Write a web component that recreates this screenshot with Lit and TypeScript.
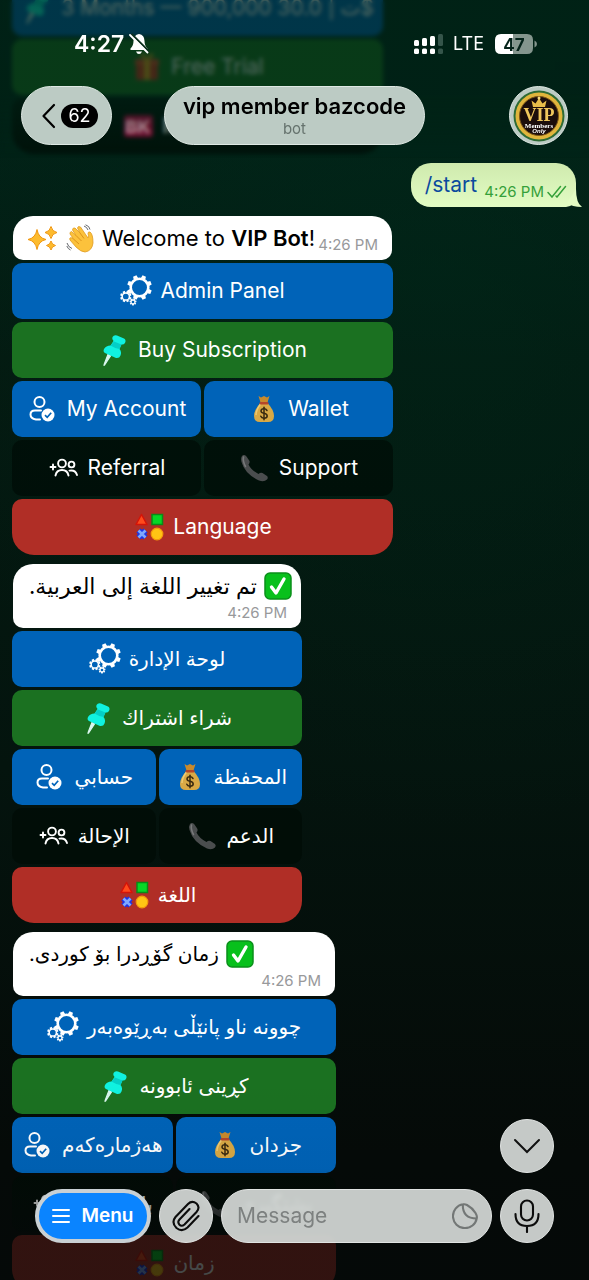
import { LitElement, html, css, svg } from "lit";
import { customElement, property } from "lit/decorators.js";

type Tone = "blue" | "green" | "red" | "dark";
type IconName =
  | "gears" | "pin" | "account" | "bag" | "referral" | "phone" | "shapes" | "gift" | "back";

interface Key { icon: IconName; label: string; tone: Tone; }
interface Keyboard { lang: string; rows: Key[][]; }

const gear = (cx: number, cy: number, r: number, teeth: number, w: number) => {
  const step = 360 / teeth;
  return svg`
    <circle cx=${cx} cy=${cy} r=${r} fill="none" stroke="#fff" stroke-width=${w}></circle>
    ${Array.from({ length: teeth }, (_, i) => svg`
      <path d="M${cx - w * 0.9} ${cy - r - w * 0.2}L${cx - w * 0.7} ${cy - r - w * 1.4}H${cx + w * 0.7}L${cx + w * 0.9} ${cy - r - w * 0.2}Z"
        fill="#fff" transform="rotate(${i * step + step / 2} ${cx} ${cy})"></path>`)}`;
};

const ICONS: Record<IconName, unknown> = {
  gears: svg`${gear(19.5, 12.5, 8.8, 8, 2.6)}${gear(5.8, 21.5, 3.6, 8, 1.5)}${gear(13, 27, 1.9, 7, 1.1)}`,
  pin: svg`
    <path d="M12.500 22L6.500 31Q5.500 32 6.500 29.500L10 20.500Z" fill="#d9f7ee" stroke="#d9f7ee" stroke-width="1.200"></path>
    <path d="M14.500 3Q16 .5 19 1.500L26 4.500Q28.500 6 27 9Q25.500 11 23.500 10.500L21.500 15Q24 18 22.500 21.500Q21.500 24.500 18 24L8 19.500Q4.500 18 6 15Q8 11.500 12.500 11.500L15.500 7Q13.500 5.500 14.500 3Z" fill="#10f2e0"></path>
    <path d="M16 7.500L23.500 10.500L21.500 15Q17 14.500 12.500 11.500Z" fill="#04cfc6"></path>`,
  account: svg`
    <g fill="none" stroke="#fff" stroke-width="2" stroke-linecap="round">
      <circle cx="12.500" cy="9" r="5"></circle>
      <path d="M14 17.500H8Q3.500 17.500 3.500 21.500Q3.500 25.500 9 26.500H13"></path>
    </g>
    <circle cx="21" cy="22" r="6.500" fill="#fff"></circle>
    <path d="M18 22.200L20.200 24.300L24.200 19.800" fill="none" stroke="#0063b8" stroke-width="1.700"></path>`,
  bag: svg`
    <path d="M10.500 3L13 4.500L16 3L19 4.500L21.500 3L19.500 9.500H12.500Z" fill="#c98a2c"></path>
    <path d="M12.500 10H19.500Q26 17 26 23Q26 29 20 29H12Q6 29 6 23Q6 17 12.500 10Z" fill="#d9a945"></path>
    <path d="M12.500 11Q8 17 8 22" fill="none" stroke="#efca72" stroke-width="1.500"></path>
    <rect x="11.500" y="9" width="9" height="2.400" rx="1.200" fill="#b5462a"></rect>
    <g fill="none" stroke="#3a2a10" stroke-width="1.500" stroke-linecap="round">
      <path d="M19 17.500Q18 15.800 16 15.800Q13 15.800 13 18Q13 19.800 16 20.300Q19.200 20.800 19.200 23Q19.200 25.200 16 25.200Q13.500 25.200 12.800 23.300"></path>
      <path d="M16 14.200V26.800"></path>
    </g>`,
  referral: svg`
    <g fill="none" stroke="#fff" stroke-width="1.900" stroke-linecap="round">
      <path d="M2.500 15H7.500M5 12.500V17.500"></path>
      <circle cx="14" cy="11.500" r="3.900"></circle>
      <circle cx="23.500" cy="12.500" r="2.900"></circle>
      <path d="M7.500 23.500Q8.500 18 14 18Q19.500 18 20.500 23.500"></path>
      <path d="M21.500 18.600Q27.500 17.500 29 23"></path>
    </g>`,
  phone: svg`
    <path d="M3 4Q5 2 7.500 4.500L10.500 9Q11 11 9.500 12.500Q12 18 19.500 22Q21.500 20 23.500 21L28 24Q29.500 25.500 28 27.500Q25 30.500 20 28.500Q6 22 2.500 10Q1.500 6 3 4Z" fill="#4a4d4e"></path>
    <path d="M4.500 5Q3.500 9 6.500 14.500" fill="none" stroke="#77797a" stroke-width="1.600" stroke-linecap="round"></path>`,
  shapes: svg`
    <path d="M8.500 3.500L14 13.500H3Z" fill="#ff4a1c" stroke="#d41408" stroke-width="1.500" stroke-linejoin="round"></path>
    <rect x="19" y="3.500" width="10.500" height="10" fill="#06d826" stroke="#0b8a17" stroke-width="1.500"></rect>
    <path d="M5.500 19.500L12.500 26.500M12.500 19.500L5.500 26.500" stroke="#1c35e8" stroke-width="6" stroke-linejoin="round"></path>
    <path d="M5.500 19.500L12.500 26.500M12.500 19.500L5.500 26.500" stroke="#7fa8ff" stroke-width="2.600"></path>
    <circle cx="24" cy="23" r="5.800" fill="#ffc414" stroke="#f59a0c" stroke-width="1.200"></circle>`,
  gift: svg`
    <rect x="5" y="12" width="22" height="17" rx="2" fill="#d3351f"></rect>
    <rect x="4" y="8" width="24" height="6" rx="1" fill="#e24a2a"></rect>
    <path d="M13 8H19V29H13Z" fill="#e8a51c"></path>
    <path d="M16 8Q8 6 10 3Q13 1 16 8Q19 1 22 3Q24 6 16 8Z" fill="#e8a51c"></path>`,
  back: svg`<rect x="2" y="5" width="29" height="22" rx="3" fill="#8c0a38"></rect>
    <text x="16" y="23" text-anchor="middle" font-family="Inter, sans-serif" font-size="18" font-weight="800" fill="#f0a8bc">BK</text>`,
};

const CHECK = svg`
  <rect x="1" y="1" width="26" height="26" rx="5" fill="#08c01c" stroke="#0a8f1a" stroke-width="1.500"></rect>
  <path d="M7.500 15L12 21L20 7" fill="none" stroke="#fff" stroke-width="3.400" stroke-linecap="round" stroke-linejoin="round"></path>`;

const keys = (l: string[]): Key[][] => [
  [{ icon: "gears", label: l[0], tone: "blue" }],
  [{ icon: "pin", label: l[1], tone: "green" }],
  [{ icon: "account", label: l[2], tone: "blue" }, { icon: "bag", label: l[3], tone: "blue" }],
  [{ icon: "referral", label: l[4], tone: "dark" }, { icon: "phone", label: l[5], tone: "dark" }],
  [{ icon: "shapes", label: l[6], tone: "red" }],
];

const EARLIER: Keyboard = {
  lang: "en", rows: [
    [{ icon: "pin", label: "3 Months — 900,000 30.0 | ت$", tone: "blue" }],
    [{ icon: "gift", label: "Free Trial", tone: "green" }],
    [{ icon: "back", label: "Main Menu", tone: "dark" }],
  ],
};
const ENGLISH: Keyboard = {
  lang: "en",
  rows: keys(["Admin Panel", "Buy Subscription", "My Account", "Wallet", "Referral", "Support", "Language"]),
};
const ARABIC: Keyboard = {
  lang: "ar",
  rows: keys(["لوحة الإدارة", "شراء اشتراك", "حسابي", "المحفظة", "الإحالة", "الدعم", "اللغة"]),
};
const KURDISH: Keyboard = {
  lang: "ckb",
  rows: keys(["چوونە ناو پانێڵی بەڕێوەبەر", "کڕینی ئابوونە", "هەژمارەکەم", "جزدان", "بانگهێشت", "پشتگیری", "زمان"]),
};

@customElement("bot-keyboard")
class BotKeyboard extends LitElement {
  @property({ attribute: false }) board!: Keyboard;

  static styles = css`
    :host { display: flex; flex-direction: column; gap: 3px; }
    .row { display: grid; grid-auto-flow: column; grid-auto-columns: minmax(0, 1fr); gap: 3px; }
    .key {
      display: flex; align-items: center; justify-content: center; gap: 8px;
      height: 56px; padding: 0; border: 0; border-radius: 10px; color: #fff;
      font: 400 21px/28px Inter, "DejaVu Sans", sans-serif; white-space: nowrap;
    }
    .blue { background: #0063b8; }
    .green { background: #1b7121; }
    .red { background: #b02e26; }
    .dark { background: rgba(0, 12, 5, .7); }
    .row:last-child .key { border-radius: 10px 10px 22px 22px; }
    .icon { width: 32px; height: 32px; flex: none; }
    .rtl { font-size: 20px; }
  `;

  render() {
    const dir = this.board.lang === "en" ? "ltr" : "rtl";
    return this.board.rows.map((row) => html`
      <div class="row">
        ${row.map((k) => html`
          <button class="key ${k.tone}" type="button">
            <svg class="icon" viewBox="0 0 32 32" aria-hidden="true">${ICONS[k.icon]}</svg>
            <span class=${dir} dir=${dir} lang=${this.board.lang}>${k.label}</span>
          </button>`)}
      </div>`);
  }
}

@customElement("chat-header")
class ChatHeader extends LitElement {
  static styles = css`
    :host { display: block; height: 158px; color: #fff; font-family: Inter, sans-serif;
      backdrop-filter: blur(2px);
      background: linear-gradient(rgba(0, 32, 20, .68) 0, rgba(0, 32, 20, .68) 95px, rgba(0, 28, 18, 0) 100%); }
    .status { display: flex; justify-content: space-between; align-items: center;
      height: 86px; padding: 2px 52px 0 74px; box-sizing: border-box; }
    .side { display: flex; align-items: center; }
    .time { font-size: 23px; font-weight: 600; line-height: 28px; margin-right: 5px; }
    .lte { font-size: 18px; line-height: 24px; margin: 0 11px 0 10px; }
    .bar { display: grid; grid-template-columns: 1fr auto 1fr; align-items: center; padding: 0 21px; }
    .pill { display: flex; align-items: center; justify-content: center; box-sizing: border-box;
      height: 59px; border: 1px solid #dfe9e4; border-radius: 30px; background: #bccbc4; color: #000; font-family: inherit; }
    .back { justify-self: start; width: 91px; padding: 0 0 0 6px; gap: 5px; }
    .count { background: #000; color: #fff; border-radius: 12px; font-size: 18px; line-height: 24px; padding: 0 7px; }
    .title { flex-direction: column; padding: 0 18px; }
    .name { font-size: 22px; line-height: 26px; font-weight: 600; margin: 0; }
    .kind { font-size: 15px; line-height: 20px; color: #65726d; }
    .avatar { justify-self: end; width: 59px; padding: 0; }
  `;

  render() {
    return html`
      <div class="status">
        <div class="side">
          <span class="time">4:27</span>
          <svg width="20" height="22" viewBox="0 0 20 22" aria-label="Silent">
            <path d="M10 1Q15.500 2 15.500 8Q15.500 13 18.500 15.500V17H1.500V15.500Q4.500 13 4.500 8Q4.500 2 10 1Z" fill="#fff"></path>
            <path d="M7 18.500H13Q12 21 10 21Q8 21 7 18.500Z" fill="#fff"></path>
            <path d="M2.500 1L20 18.500" stroke="#0b2f1b" stroke-width="2.200"></path>
            <path d="M1 2L18.500 19.500" stroke="#fff" stroke-width="1.800" stroke-linecap="round"></path>
          </svg>
        </div>
        <div class="side">
          <svg width="29" height="20" viewBox="0 0 29 20" aria-label="Signal">
            <g fill="#fff">
              <rect x="0" y="14.500" width="5" height="5.500" rx="1.500"></rect>
              <rect x="8" y="14.500" width="5" height="5.500" rx="1.500"></rect>
              <rect x="16" y="14.500" width="5" height="5.500" rx="1.500"></rect>
              <rect x="0" y="6" width="5" height="6" rx="1.500"></rect>
              <rect x="8" y="4" width="5" height="8" rx="1.500"></rect>
              <rect x="16" y="2" width="5" height="10" rx="1.500"></rect>
            </g>
            <g fill="#35554a">
              <rect x="24" y="14.500" width="5" height="5.500" rx="1.500"></rect>
              <rect x="24" y="0" width="5" height="12" rx="1.500"></rect>
            </g>
          </svg>
          <span class="lte">LTE</span>
          <svg width="42" height="20" viewBox="0 0 42 20" aria-label="Battery">
            <path d="M6 0H18.500V20H6Q0 20 0 14V6Q0 0 6 0Z" fill="#fff"></path>
            <path d="M18.500 0H32Q38 0 38 6V14Q38 20 32 20H18.500Z" fill="#84968e"></path>
            <path d="M39.500 6.500Q42 7.500 42 10Q42 12.500 39.500 13.500Z" fill="#84968e"></path>
            <text x="19" y="16.500" text-anchor="middle" font-size="17" font-weight="700" fill="#04231a">47</text>
          </svg>
        </div>
      </div>
      <div class="bar">
        <button class="pill back" type="button" aria-label="Back">
          <svg width="15" height="26" viewBox="0 0 15 26" aria-hidden="true">
            <path d="M13 2L2.500 13L13 24" fill="none" stroke="#000" stroke-width="2.200" stroke-linecap="round" stroke-linejoin="round"></path>
          </svg>
          <span class="count">62</span>
        </button>
        <div class="pill title">
          <h1 class="name">vip member bazcode</h1>
          <span class="kind">bot</span>
        </div>
        <button class="pill avatar" type="button" aria-label="Profile">
          <svg width="52" height="52" viewBox="0 0 52 52" aria-hidden="true">
            <circle cx="26" cy="26" r="25.500" fill="#2e6b35"></circle>
            <circle cx="26" cy="26" r="21.500" fill="#1b0d0b" stroke="#e0b53c" stroke-width="4"></circle>
            <circle cx="26" cy="26" r="19.500" fill="none" stroke="#7d5516" stroke-width="1"></circle>
            <path d="M20 17L18.500 10.500L22.500 13.500L26 8L29.500 13.500L33.500 10.500L32 17Z" fill="#e8bd4a"></path>
            <circle cx="26" cy="8" r="1.500" fill="#f6dc7c"></circle>
            <text x="26" y="31" text-anchor="middle" font-family="Liberation Serif, serif" font-size="18" font-weight="700" fill="#efc65c">VIP</text>
            <text x="26" y="37.500" text-anchor="middle" font-family="Liberation Serif, serif" font-size="7" font-weight="700" fill="#fff">Members</text>
            <text x="26" y="43" text-anchor="middle" font-family="Liberation Sans, sans-serif" font-size="6" font-weight="700" font-style="italic" fill="#fff">Only</text>
          </svg>
        </button>
      </div>`;
  }
}

@customElement("chat-composer")
class ChatComposer extends LitElement {
  static styles = css`
    :host { display: flex; flex-direction: column; gap: 16px; padding: 40px 35px 37px; font-family: Inter, sans-serif;
      background: linear-gradient(rgba(5, 9, 8, 0) 0, rgba(5, 9, 8, .04) 90px, rgba(5, 9, 8, .74) 155px, rgba(5, 9, 8, .74) 100%); }
    .line { display: flex; gap: 8px; }
    .round, .field, .menu { box-sizing: border-box; height: 54px; border-radius: 27px; }
    .round, .field { background: rgba(214, 218, 216, .92); border: 1px solid #e0e3e2; backdrop-filter: blur(2px); }
    .round { display: flex; align-items: center; justify-content: center; flex: none; width: 54px; padding: 0; }
    .down { align-self: flex-end; }
    .menu { display: flex; align-items: center; justify-content: center; gap: 11px; flex: none; width: 116px; padding: 0;
      border: 4px solid #c9d0d4; background: #0a84ff; color: #fff; font: 600 19px/26px Inter, sans-serif; }
    .field { display: flex; align-items: center; flex: 1; min-width: 0; padding: 0 13px 0 15px; }
    .input { flex: 1; min-width: 0; border: 0; padding: 0; outline: 0; background: none; color: #000;
      font: 400 21px/28px Inter, sans-serif; }
    .input::placeholder { color: #7d8180; opacity: 1; }
  `;

  render() {
    return html`
      <button class="round down" type="button" aria-label="Scroll to latest">
        <svg width="28" height="16" viewBox="0 0 28 16"><path d="M2 2L14 14L26 2" fill="none" stroke="#111" stroke-width="2" stroke-linecap="round"></path></svg>
      </button>
      <div class="line">
        <button class="menu" type="button">
          <svg width="18" height="16" viewBox="0 0 18 16" aria-hidden="true"><path d="M1 2H17M1 8H17M1 14H17" stroke="#fff" stroke-width="2" stroke-linecap="round"></path></svg>
          Menu
        </button>
        <button class="round" type="button" aria-label="Attach">
          <svg width="30" height="34" viewBox="0 0 30 34">
            <path d="M27.500 17L16.500 28.500Q11 33.500 5.500 29Q0 23.500 4.500 18L17 5Q21 1 25.500 4.500Q29.500 8.500 25.500 13L13.500 25.500Q10.500 28 8.300 25.500Q6.200 23 8.500 20.500L18.500 10"
              fill="none" stroke="#0c0c0c" stroke-width="2.100" stroke-linecap="round"></path>
          </svg>
        </button>
        <div class="field">
          <input class="input" type="text" placeholder="Message" aria-label="Message">
          <svg width="26" height="26" viewBox="0 0 26 26" aria-hidden="true">
            <g fill="none" stroke="#737776" stroke-width="2.100" stroke-linejoin="round">
              <path d="M11 1.300Q13 .9 15 2Q20.500 5 23.500 10Q25.300 13 24.800 15A12 12 0 1 1 11 1.300Z"></path>
              <path d="M10.800 1.500Q10.500 15.500 24.700 15.500"></path>
            </g>
          </svg>
        </div>
        <button class="round" type="button" aria-label="Record voice">
          <svg width="26" height="34" viewBox="0 0 26 34">
            <g fill="none" stroke="#0c0c0c" stroke-width="2.100" stroke-linecap="round">
              <rect x="7" y="1.500" width="12" height="20" rx="6"></rect>
              <path d="M1.500 15Q1.500 27 13 27Q24.500 27 24.500 15M13 27V33"></path>
            </g>
          </svg>
        </button>
      </div>`;
  }
}

@customElement("app-root")
class AppRoot extends LitElement {
  static styles = css`
    :host { display: block; }
    .screen { display: grid; grid-template: minmax(0, 1fr) / minmax(0, 1fr); height: 100vh; overflow: hidden;
      background:
        radial-gradient(circle at 75% 22%, rgba(0, 44, 28, .4), transparent 50%),
        linear-gradient(#00261a 0, #031a11 28%, #04140e 60%, #050a08 90%); }
    .log, .top, .bottom { grid-area: 1 / 1; }
    .top { align-self: start; }
    .bottom { align-self: end; }
    .log { display: flex; flex-direction: column; align-items: flex-start; gap: 9px; margin-top: -20px; padding: 0 12px;
      font-family: Inter, "DejaVu Sans", sans-serif; }
    .group { display: flex; flex-direction: column; flex: none; gap: 3px; max-width: 100%; }
    .earlier { width: 371px; }
    .wide { width: 381px; }
    .narrow { width: 290px; }
    .medium { width: 324px; }
    .bubble { margin: 0 1px; padding: 0 14px; background: #fff; color: #000; border-radius: 20px 20px 10px 10px;
      font-size: 22px; line-height: 28px; white-space: nowrap; }
    .inline { display: flex; align-items: center; height: 44px; }
    .stacked { display: flex; flex-direction: column; height: 64px; padding: 8px 14px 0 16px; box-sizing: border-box; }
    .emoji { flex: none; margin-right: 7px; }
    .strong { font-weight: 600; }
    .arabic { display: flex; align-items: center; gap: 7px; height: 28px; align-self: flex-start; font-size: 20px; }
    .arabic:lang(ar) { font-size: 22px; }
    .stamp { font-size: 15px; line-height: 18px; color: #98999b; }
    .inline .stamp { align-self: flex-end; margin: 0 0 6px auto; }
    .stacked .stamp { align-self: flex-end; margin-top: 4px; }
    .sent { display: flex; align-items: center; position: relative; align-self: flex-end; flex: none; box-sizing: border-box;
      height: 44px; margin-right: 1px; padding: 0 9px 0 14px; border-radius: 20px 20px 10px 20px;
      background: linear-gradient(#cfeaae, #e2fcc4); font-size: 21px; line-height: 28px; }
    .command { color: #0b4a9e; text-decoration: none; }
    .sent .stamp { align-self: flex-end; margin: 0 3px 6px 7px; color: #35a03a; }
    .ticks { align-self: flex-end; margin-bottom: 9px; }
    .tail { position: absolute; right: -6px; bottom: 0; }
  `;

  render() {
    return html`
      <main class="screen">
        <section class="log">
          <div class="group earlier"><bot-keyboard .board=${EARLIER}></bot-keyboard></div>
          <div class="sent">
            <a class="command" href="#start">/start</a>
            <span class="stamp">4:26 PM</span>
            <svg class="ticks" width="20" height="13" viewBox="0 0 20 13" aria-label="Read">
              <path d="M1 7.500L5 12L13.500 1.500M9 11L10 12L18.500 1.500" fill="none" stroke="#35a03a" stroke-width="1.500" stroke-linecap="round"></path>
            </svg>
            <svg class="tail" width="18" height="18" viewBox="0 0 18 18" aria-hidden="true"><path d="M12 0Q12 14 18 18Q8 18 3 14Z" fill="#e2fcc4"></path></svg>
          </div>
          <div class="group wide">
            <div class="bubble inline">
              <svg class="emoji" width="32" height="28" viewBox="0 0 32 28" aria-label="sparkles">
                <g fill="#fdbb2d" stroke="#f0960f" stroke-width="1" stroke-linejoin="round">
                  <path d="M10 5.500Q11.500 14 19 15.500Q11.500 17 10 25.500Q8.500 17 1 15.500Q8.500 14 10 5.500Z"></path>
                  <path d="M24 2.500Q25 7.500 30 8.500Q25 9.500 24 14.500Q23 9.500 18 8.500Q23 7.500 24 2.500Z"></path>
                  <path d="M24 17Q24.800 20.700 28.500 21.500Q24.800 22.300 24 26Q23.200 22.300 19.500 21.500Q23.200 20.700 24 17Z"></path>
                </g>
              </svg>
              <svg class="emoji" width="29" height="29" viewBox="0 0 29 29" aria-label="waving hand">
                <path d="M24 8Q27 10 27 19Q26 27 19 28Q15 28 10 23L4 16Q3 14 5 13.500L8 15.500L4 10Q3.500 8 5.500 7.500L10 11.500L6.500 6Q6.500 3.500 9 4L14 9L11.500 4Q12 1.500 14.500 3L22 14Q23 12 22 9.500Q22 7.500 24 8Z" fill="#fcc23c" stroke="#e09a20" stroke-width=".8"></path>
                <path d="M8 15.500L13 20M10 11.500L15.500 17M14 9L18 14.500" fill="none" stroke="#dc931c" stroke-width="1"></path>
                <path d="M18 2Q21 3 22 6M19.500 .8Q23.500 2 24 5.500M1 19Q2 23 6 24.500M.8 22Q2 25 4.500 26" fill="none" stroke="#66696e" stroke-width="1"></path>
              </svg>
              <span>Welcome to <b class="strong">VIP Bot</b>!</span>
              <span class="stamp">4:26 PM</span>
            </div>
            <bot-keyboard .board=${ENGLISH}></bot-keyboard>
          </div>
          <div class="group narrow">
            <div class="bubble stacked">
              <div class="arabic" dir="rtl" lang="ar">
                <svg width="28" height="28" viewBox="0 0 28 28" aria-label="done">${CHECK}</svg>
                <span>تم تغيير اللغة إلى العربية.</span>
              </div>
              <span class="stamp">4:26 PM</span>
            </div>
            <bot-keyboard .board=${ARABIC}></bot-keyboard>
          </div>
          <div class="group medium">
            <div class="bubble stacked">
              <div class="arabic" dir="rtl" lang="ckb">
                <svg width="28" height="28" viewBox="0 0 28 28" aria-label="done">${CHECK}</svg>
                <span>زمان گۆڕدرا بۆ کوردی.</span>
              </div>
              <span class="stamp">4:26 PM</span>
            </div>
            <bot-keyboard .board=${KURDISH}></bot-keyboard>
          </div>
        </section>
        <chat-header class="top"></chat-header>
        <chat-composer class="bottom"></chat-composer>
      </main>`;
  }
}
